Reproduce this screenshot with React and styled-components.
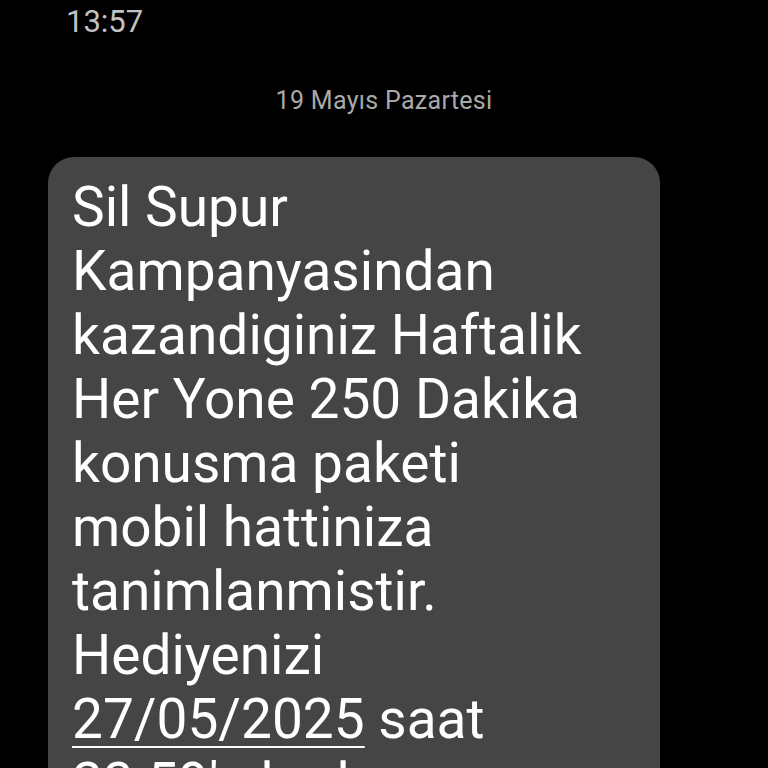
import React from "react";
import styled, { createGlobalStyle } from "styled-components";

const Global = createGlobalStyle`
  html, body {
    margin: 0;
    background: #000;
  }
  body {
    font-family: Roboto, "Noto Sans", sans-serif;
  }
`;

const lines = [
  "Sil Supur",
  "Kampanyasindan",
  "kazandiginiz Haftalik",
  "Her Yone 250 Dakika",
  "konusma paketi",
  "mobil hattiniza",
  "tanimlanmistir.",
  "Hediyenizi",
];

function App() {
  return (
    <Screen>
      <Global />
      <TopEdge />
      <Clock>13:57</Clock>
      <DateLabel>19 Mayıs Pazartesi</DateLabel>
      <Bubble>
        {lines.map((line, i) => (
          <Line key={i}>{line}</Line>
        ))}
        <Line>
          <Link>27/05/2025</Link> saat
        </Line>
        <Line>23:59'a kadar</Line>
      </Bubble>
    </Screen>
  );
}

const Screen = styled.div`
  width: 768px;
  height: 768px;
  overflow: hidden;
  background: #000;
  display: flex;
  flex-direction: column;
`;

const TopEdge = styled.div`
  height: 4px;
  margin: 0 338px 0 55px;
  background: #121212;
`;

const Clock = styled.div`
  margin: 4px 0 0 66px;
  height: 36px;
  font-size: 31px;
  line-height: 36px;
  color: #c2c2c2;
`;

const DateLabel = styled.div`
  margin-top: 46px;
  text-align: center;
  font-size: 25px;
  line-height: 30px;
  color: #a9a9a9;
  letter-spacing: 0.3px;
`;

const Bubble = styled.div`
  margin: 41px 0 0 48px;
  width: 612px;
  box-sizing: border-box;
  padding: 18px 24px 0 24px;
  background: #454545;
  border-radius: 26px;
  color: #fff;
  flex-shrink: 0;
`;

const Line = styled.div`
  font-size: 55px;
  line-height: 64px;
  white-space: nowrap;
`;

const Link = styled.span`
  text-decoration: underline;
  text-decoration-thickness: 2px;
  text-underline-offset: 8px;
`;

export default App;
